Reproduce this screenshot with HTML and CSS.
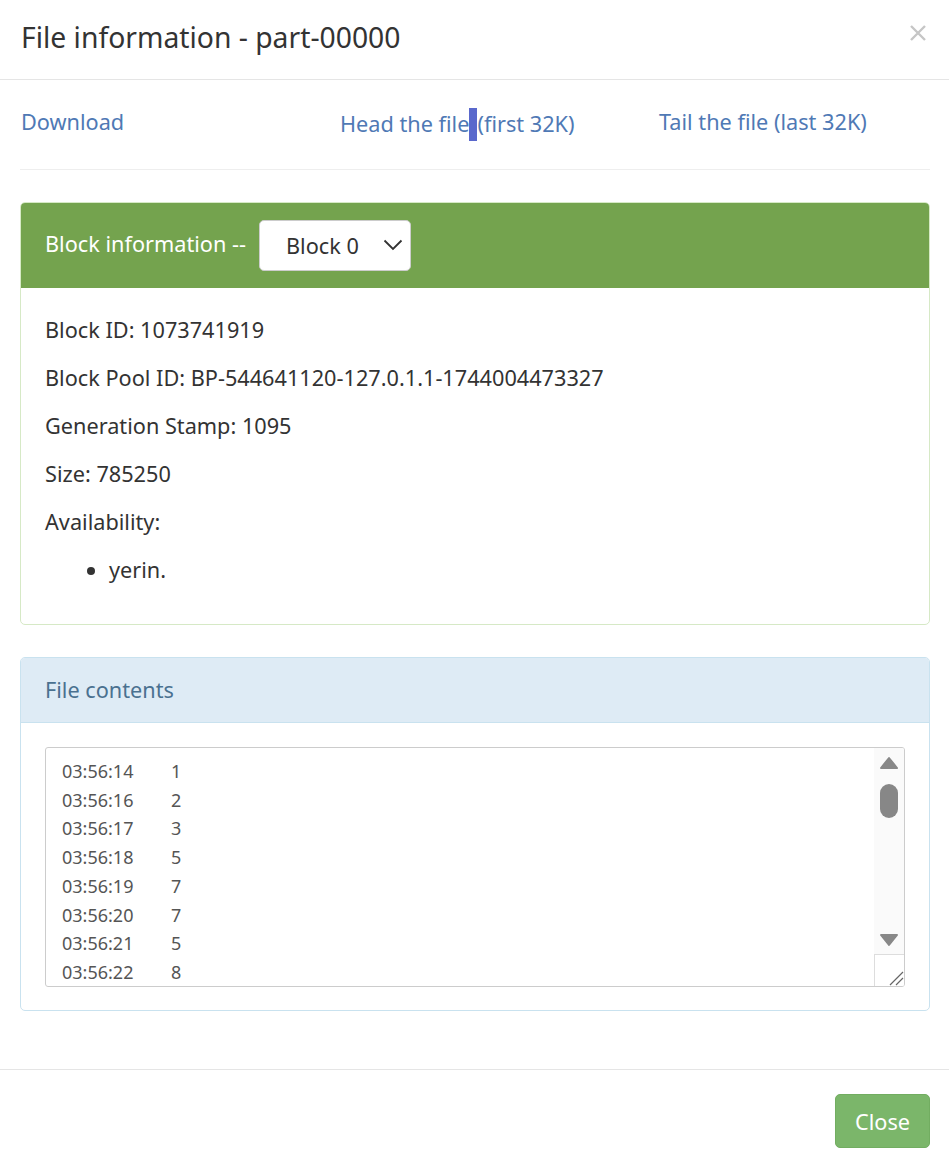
FILE: index.html
```html
<!DOCTYPE html>
<html lang="en">
<head>
<meta charset="utf-8">
<title>File information - part-00000</title>
<link rel="stylesheet" href="styles.css">
</head>
<body>
<div class="modal">
  <div class="modal-header">
    <h4 class="modal-title">File information - part-00000</h4>
    <span class="close" aria-label="Close"><svg width="18" height="18" viewBox="0 0 18 18"><path d="M2 2 L16 16 M16 2 L2 16" stroke="#c6c6c6" stroke-width="2.4"/></svg></span>
  </div>
  <div class="modal-body">
    <div class="links">
      <a class="lnk">Download</a>
      <a class="lnk">Head the file<span class="sel"> </span>(first 32K)</a>
      <a class="lnk">Tail the file (last 32K)</a>
    </div>
    <hr class="sep">
    <div class="panel panel-success">
      <div class="panel-heading">
        <span class="ph-title">Block information --</span>
        <div class="select">
          <span>Block 0</span>
          <svg class="chev" width="20" height="12" viewBox="0 0 20 12"><path d="M1.5 1.5 L10 10 L18.5 1.5" fill="none" stroke="#333" stroke-width="1.8"/></svg>
        </div>
      </div>
      <div class="panel-body">
        <p>Block ID: 1073741919</p>
        <p>Block Pool ID: BP-544641120-127.0.1.1-1744004473327</p>
        <p>Generation Stamp: 1095</p>
        <p>Size: 785250</p>
        <p>Availability:</p>
        <ul class="avail"><li>yerin.</li></ul>
      </div>
    </div>
    <div class="panel panel-info">
      <div class="panel-heading info-head">File contents</div>
      <div class="panel-body info-body">
        <div class="textarea">
          <div class="ta-text">
            <div class="row"><span class="t">03:56:14</span><span>1</span></div>
            <div class="row"><span class="t">03:56:16</span><span>2</span></div>
            <div class="row"><span class="t">03:56:17</span><span>3</span></div>
            <div class="row"><span class="t">03:56:18</span><span>5</span></div>
            <div class="row"><span class="t">03:56:19</span><span>7</span></div>
            <div class="row"><span class="t">03:56:20</span><span>7</span></div>
            <div class="row"><span class="t">03:56:21</span><span>5</span></div>
            <div class="row"><span class="t">03:56:22</span><span>8</span></div>
          </div>
          <div class="sbar">
            <div class="track">
              <svg class="arr" width="20" height="14" viewBox="0 0 20 14"><path d="M10 2 L18 12 L2 12 Z" fill="#888" stroke="#888" stroke-width="2" stroke-linejoin="round"/></svg>
              <div class="thumb"></div>
              <div class="grow"></div>
              <svg class="arr" width="20" height="14" viewBox="0 0 20 14"><path d="M2 2 L18 2 L10 12 Z" fill="#888" stroke="#888" stroke-width="2" stroke-linejoin="round"/></svg>
            </div>
            <div class="corner">
              <svg width="16" height="16" viewBox="0 0 16 16"><path d="M2 15 L15 2 M8 15 L15 8" stroke="#666" stroke-width="1.2"/></svg>
            </div>
          </div>
        </div>
      </div>
    </div>
  </div>
  <div class="modal-footer">
    <button class="btn-close">Close</button>
  </div>
</div>
</body>
</html>
```
FILE: styles.css
```css
html, body {
  margin: 0;
  padding: 0;
  background: #fff;
}
body {
  font-family: "Noto Sans", "Noto Sans CJK KR", sans-serif;
  color: #333;
  font-size: 21.7px;
  line-height: 28px;
}
.modal {
  width: 949px;
  height: 1162px;
  display: flex;
  flex-direction: column;
}
.modal-header {
  height: 79px;
  border-bottom: 1px solid #e5e5e5;
  display: flex;
  align-items: center;
  justify-content: space-between;
  padding: 0 21px;
}
.modal-title {
  margin: 0;
  font-weight: 400;
  font-size: 28.3px;
  line-height: 36px;
  color: #333;
  margin-top: -6px;
}
.close {
  display: flex;
  margin-top: -13px;
  margin-right: 1px;
}
.modal-body {
  padding: 28px 19px 0 20px;
  flex: 1;
}
.links {
  display: grid;
  grid-template-columns: 319px 319px 1fr;
  padding-left: 1px;
  height: 28px;
}
.lnk {
  color: #4f79b5;
  text-decoration: none;
  white-space: nowrap;
}
.sel {
  background: #5a68cc;
  display: inline-block;
  width: 8px;
  height: 33px;
  vertical-align: -9px;
}
.sep {
  border: 0;
  border-top: 1px solid #eee;
  margin: 33px 0 32px;
}
.panel {
  border: 1px solid #d6e9c6;
  border-radius: 5px;
  overflow: hidden;
}
.panel-success .panel-heading {
  background: #74a34e;
  color: #fff;
  height: 85px;
  box-sizing: border-box;
  display: flex;
  align-items: center;
  padding: 0 24px;
  gap: 13px;
}
.ph-title {
  margin-top: -4px;
}
.select {
  width: 152px;
  height: 51px;
  box-sizing: border-box;
  border: 1px solid #ccc;
  border-radius: 5px;
  background: #fff;
  color: #333;
  display: flex;
  align-items: center;
  justify-content: space-between;
  padding: 0 7px 0 26px;
}
.chev {
  margin-top: -2px;
}
.panel-body {
  padding: 28px 24px 20px;
}
.panel-body p {
  margin: 0 0 20px;
}
.avail {
  margin: 0 0 20px;
  padding-left: 64px;
}
.panel-info {
  border-color: #c9e2ef;
  margin-top: 32px;
}
.info-head {
  background: #deebf5;
  color: #4a7190;
  height: 65px;
  box-sizing: border-box;
  border-bottom: 1px solid #c9e2ef;
  padding: 0 24px;
  display: flex;
  align-items: center;
}
.info-body {
  padding: 24px 24px 23px;
}
.textarea {
  height: 240px;
  box-sizing: border-box;
  border: 1px solid #ccc;
  border-radius: 3px;
  display: flex;
  overflow: hidden;
}
.ta-text {
  flex: 1;
  padding: 9px 16px 0;
  color: #555;
  font-size: 18px;
  line-height: 28.7px;
  overflow: hidden;
}
.row {
  display: flex;
  white-space: nowrap;
}
.t {
  width: 109px;
}
.sbar {
  width: 30px;
  display: flex;
  flex-direction: column;
  background: #fafafa;
}
.track {
  flex: 1;
  display: flex;
  flex-direction: column;
  align-items: center;
  padding: 8px 0 7px;
}
.arr {
  display: block;
}
.thumb {
  width: 18px;
  height: 34px;
  border-radius: 9px;
  background: #878787;
  margin-top: 14px;
}
.grow {
  flex: 1;
}
.corner {
  height: 31px;
  border-top: 1px solid #ddd;
  border-left: 1px solid #ddd;
  background: #fff;
  display: flex;
  align-items: flex-end;
  justify-content: flex-end;
}
.modal-footer {
  border-top: 1px solid #e5e5e5;
  height: 93px;
  box-sizing: border-box;
  display: flex;
  justify-content: flex-end;
  align-items: center;
  padding: 10px 19px 0;
}
.btn-close {
  width: 95px;
  height: 54px;
  background: #7bb66a;
  border: 1px solid #72ad61;
  border-radius: 5px;
  color: #fff;
  font-family: inherit;
  font-size: 21.7px;
}
```
